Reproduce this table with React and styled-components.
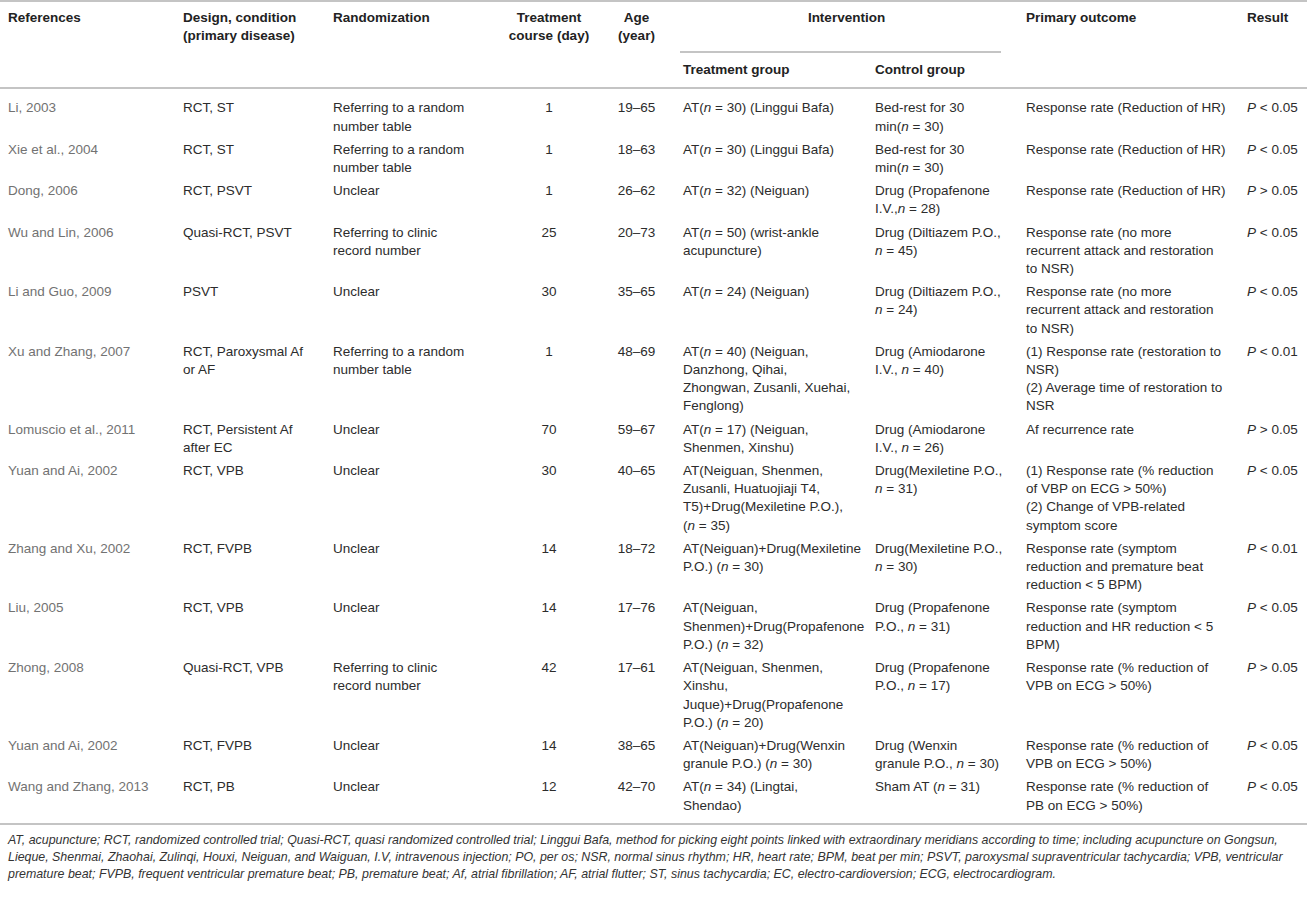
import React from "react";
import styled, { createGlobalStyle } from "styled-components";

const GlobalStyle = createGlobalStyle`
  body {
    margin: 0;
    background: #ffffff;
    font-family: "Liberation Sans", Arial, Helvetica, sans-serif;
  }
`;

const RULE = "2px solid #c4c4c4";

const Page = styled.div`
  width: 1307px;
  background: #fff;
`;

const Table = styled.table`
  width: 1307px;
  border-collapse: collapse;
  table-layout: fixed;
  font-size: 13.5px;
  line-height: 18.2px;

  thead {
    border-top: ${RULE};
    border-bottom: ${RULE};
  }
`;

const Th = styled.th`
  position: relative;
  text-align: ${(p) => (p.$center ? "center" : "left")};
  vertical-align: top;
  font-weight: bold;
  color: #222;
  padding: ${(p) => (p.$sub ? "8px 8px 8px" : "7px 8px 0")};
  line-height: 18.4px;
  white-space: nowrap;
`;

const SpanTh = styled(Th)`
  height: 44px;
  &::after {
    content: "";
    position: absolute;
    left: 5px;
    right: 17px;
    bottom: 0;
    border-bottom: ${RULE};
  }
`;

const Row = styled.tr`
  &:first-child td {
    padding-top: 10px;
  }
  &:last-child td {
    padding-bottom: 8px;
  }
`;

const Td = styled.td`
  text-align: ${(p) => (p.$center ? "center" : "left")};
  vertical-align: top;
  color: ${(p) => (p.$muted ? "#727272" : "#2c2c2c")};
  padding: 4px 8px 1px;
  white-space: nowrap;
`;

const Em = styled.i`
  font-style: italic;
`;

const Footnote = styled.div`
  border-top: ${RULE};
  padding: 7px 8px 8px;
  font-size: 12.4px;
  line-height: 17px;
  font-style: italic;
  color: #333;
  white-space: nowrap;
`;

const cols = [175, 150, 175, 98, 77, 192, 151, 221, 68];

const rows = [
  { ref: "Li, 2003", design: ["RCT, ST"], rand: ["Referring to a random", "number table"], days: "1", age: "19–65", treat: ["AT(*n* = 30) (Linggui Bafa)"], ctrl: ["Bed-rest for 30", "min(*n* = 30)"], out: ["Response rate (Reduction of HR)"], res: "*P* < 0.05" },
  { ref: "Xie et al., 2004", design: ["RCT, ST"], rand: ["Referring to a random", "number table"], days: "1", age: "18–63", treat: ["AT(*n* = 30) (Linggui Bafa)"], ctrl: ["Bed-rest for 30", "min(*n* = 30)"], out: ["Response rate (Reduction of HR)"], res: "*P* < 0.05" },
  { ref: "Dong, 2006", design: ["RCT, PSVT"], rand: ["Unclear"], days: "1", age: "26–62", treat: ["AT(*n* = 32) (Neiguan)"], ctrl: ["Drug (Propafenone", "I.V.,*n* = 28)"], out: ["Response rate (Reduction of HR)"], res: "*P* > 0.05" },
  { ref: "Wu and Lin, 2006", design: ["Quasi-RCT, PSVT"], rand: ["Referring to clinic", "record number"], days: "25", age: "20–73", treat: ["AT(*n* = 50) (wrist-ankle", "acupuncture)"], ctrl: ["Drug (Diltiazem P.O.,", "*n* = 45)"], out: ["Response rate (no more", "recurrent attack and restoration", "to NSR)"], res: "*P* < 0.05" },
  { ref: "Li and Guo, 2009", design: ["PSVT"], rand: ["Unclear"], days: "30", age: "35–65", treat: ["AT(*n* = 24) (Neiguan)"], ctrl: ["Drug (Diltiazem P.O.,", "*n* = 24)"], out: ["Response rate (no more", "recurrent attack and restoration", "to NSR)"], res: "*P* < 0.05" },
  { ref: "Xu and Zhang, 2007", design: ["RCT, Paroxysmal Af", "or AF"], rand: ["Referring to a random", "number table"], days: "1", age: "48–69", treat: ["AT(*n* = 40) (Neiguan,", "Danzhong, Qihai,", "Zhongwan, Zusanli, Xuehai,", "Fenglong)"], ctrl: ["Drug (Amiodarone", "I.V., *n* = 40)"], out: ["(1) Response rate (restoration to", "NSR)", "(2) Average time of restoration to", "NSR"], res: "*P* < 0.01" },
  { ref: "Lomuscio et al., 2011", design: ["RCT, Persistent Af", "after EC"], rand: ["Unclear"], days: "70", age: "59–67", treat: ["AT(*n* = 17) (Neiguan,", "Shenmen, Xinshu)"], ctrl: ["Drug (Amiodarone", "I.V., *n* = 26)"], out: ["Af recurrence rate"], res: "*P* > 0.05" },
  { ref: "Yuan and Ai, 2002", design: ["RCT, VPB"], rand: ["Unclear"], days: "30", age: "40–65", treat: ["AT(Neiguan, Shenmen,", "Zusanli, Huatuojiaji T4,", "T5)+Drug(Mexiletine P.O.),", "(*n* = 35)"], ctrl: ["Drug(Mexiletine P.O.,", "*n* = 31)"], out: ["(1) Response rate (% reduction", "of VBP on ECG > 50%)", "(2) Change of VPB-related", "symptom score"], res: "*P* < 0.05" },
  { ref: "Zhang and Xu, 2002", design: ["RCT, FVPB"], rand: ["Unclear"], days: "14", age: "18–72", treat: ["AT(Neiguan)+Drug(Mexiletine", "P.O.) (*n* = 30)"], ctrl: ["Drug(Mexiletine P.O.,", "*n* = 30)"], out: ["Response rate (symptom", "reduction and premature beat", "reduction < 5 BPM)"], res: "*P* < 0.01" },
  { ref: "Liu, 2005", design: ["RCT, VPB"], rand: ["Unclear"], days: "14", age: "17–76", treat: ["AT(Neiguan,", "Shenmen)+Drug(Propafenone", "P.O.) (*n* = 32)"], ctrl: ["Drug (Propafenone", "P.O., *n* = 31)"], out: ["Response rate (symptom", "reduction and HR reduction < 5", "BPM)"], res: "*P* < 0.05" },
  { ref: "Zhong, 2008", design: ["Quasi-RCT, VPB"], rand: ["Referring to clinic", "record number"], days: "42", age: "17–61", treat: ["AT(Neiguan, Shenmen,", "Xinshu,", "Juque)+Drug(Propafenone", "P.O.) (*n* = 20)"], ctrl: ["Drug (Propafenone", "P.O., *n* = 17)"], out: ["Response rate (% reduction of", "VPB on ECG > 50%)"], res: "*P* > 0.05" },
  { ref: "Yuan and Ai, 2002", design: ["RCT, FVPB"], rand: ["Unclear"], days: "14", age: "38–65", treat: ["AT(Neiguan)+Drug(Wenxin", "granule P.O.) (*n* = 30)"], ctrl: ["Drug (Wenxin", "granule P.O., *n* = 30)"], out: ["Response rate (% reduction of", "VPB on ECG > 50%)"], res: "*P* < 0.05" },
  { ref: "Wang and Zhang, 2013", design: ["RCT, PB"], rand: ["Unclear"], days: "12", age: "42–70", treat: ["AT(*n* = 34) (Lingtai,", "Shendao)"], ctrl: ["Sham AT (*n* = 31)"], out: ["Response rate (% reduction of", "PB on ECG > 50%)"], res: "*P* < 0.05" },
];

const notes = [
  "AT, acupuncture; RCT, randomized controlled trial; Quasi-RCT, quasi randomized controlled trial; Linggui Bafa, method for picking eight points linked with extraordinary meridians according to time; including acupuncture on Gongsun,",
  "Lieque, Shenmai, Zhaohai, Zulinqi, Houxi, Neiguan, and Waiguan, I.V, intravenous injection; PO, per os; NSR, normal sinus rhythm; HR, heart rate; BPM, beat per min; PSVT, paroxysmal supraventricular tachycardia; VPB, ventricular",
  "premature beat; FVPB, frequent ventricular premature beat; PB, premature beat; Af, atrial fibrillation; AF, atrial flutter; ST, sinus tachycardia; EC, electro-cardioversion; ECG, electrocardiogram.",
];

// "*x*" marks an italic run (n, P)
const Rich = ({ text }) =>
  text.split("*").map((part, i) => (i % 2 ? <Em key={i}>{part}</Em> : <React.Fragment key={i}>{part}</React.Fragment>));

const Lines = ({ lines }) =>
  lines.map((line, i) => (
    <React.Fragment key={i}>
      {i > 0 && <br />}
      <Rich text={line} />
    </React.Fragment>
  ));

export default function App() {
  return (
    <Page>
      <GlobalStyle />
      <Table>
        <colgroup>
          {cols.map((w, i) => (
            <col key={i} style={{ width: w }} />
          ))}
        </colgroup>
        <thead>
          <tr>
            <Th rowSpan={2}>References</Th>
            <Th rowSpan={2}>
              Design, condition
              <br />
              (primary disease)
            </Th>
            <Th rowSpan={2}>Randomization</Th>
            <Th rowSpan={2} $center>
              Treatment
              <br />
              course (day)
            </Th>
            <Th rowSpan={2} $center>
              Age
              <br />
              (year)
            </Th>
            <SpanTh colSpan={2} $center>
              Intervention
            </SpanTh>
            <Th rowSpan={2}>Primary outcome</Th>
            <Th rowSpan={2}>Result</Th>
          </tr>
          <tr>
            <Th $sub>Treatment group</Th>
            <Th $sub>Control group</Th>
          </tr>
        </thead>
        <tbody>
          {rows.map((r, i) => (
            <Row key={i}>
              <Td $muted>{r.ref}</Td>
              <Td>
                <Lines lines={r.design} />
              </Td>
              <Td>
                <Lines lines={r.rand} />
              </Td>
              <Td $center>{r.days}</Td>
              <Td $center>{r.age}</Td>
              <Td>
                <Lines lines={r.treat} />
              </Td>
              <Td>
                <Lines lines={r.ctrl} />
              </Td>
              <Td>
                <Lines lines={r.out} />
              </Td>
              <Td>
                <Rich text={r.res} />
              </Td>
            </Row>
          ))}
        </tbody>
      </Table>
      <Footnote>
        <Lines lines={notes} />
      </Footnote>
    </Page>
  );
}
